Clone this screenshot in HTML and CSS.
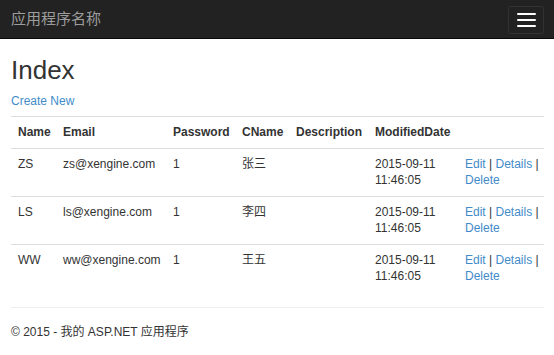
FILE: index.html
```html
<!DOCTYPE html>
<html lang="zh-CN">
<head>
  <meta charset="UTF-8" />
  <meta name="viewport" content="width=device-width, initial-scale=1.0"/>
  <title>Index - 我的 ASP.NET 应用程序</title>
  <link rel="stylesheet" href="styles.css">
</head>
<body>
  <div class="navbar">
    <a class="navbar-brand" href="#">应用程序名称</a>
    <button class="navbar-toggle" type="button">
      <span class="icon-bar"></span>
      <span class="icon-bar"></span>
      <span class="icon-bar"></span>
    </button>
  </div>

  <div class="container body-content">
    <h2>Index</h2>

    <p class="create">
      <a href="#">Create New</a>
    </p>

    <table class="table">
      <colgroup>
        <col class="col-name">
        <col class="col-email">
        <col class="col-password">
        <col class="col-cname">
        <col class="col-desc">
        <col class="col-date">
        <col class="col-actions">
      </colgroup>
      <tr>
        <th>Name</th>
        <th>Email</th>
        <th>Password</th>
        <th>CName</th>
        <th>Description</th>
        <th>ModifiedDate</th>
        <th></th>
      </tr>
      <tr>
        <td>ZS</td>
        <td>zs@xengine.com</td>
        <td>1</td>
        <td>张三</td>
        <td></td>
        <td>2015-09-11 11:46:05</td>
        <td class="actions"><a href="#">Edit</a> | <a href="#">Details</a> | <a href="#">Delete</a></td>
      </tr>
      <tr>
        <td>LS</td>
        <td>ls@xengine.com</td>
        <td>1</td>
        <td>李四</td>
        <td></td>
        <td>2015-09-11 11:46:05</td>
        <td class="actions"><a href="#">Edit</a> | <a href="#">Details</a> | <a href="#">Delete</a></td>
      </tr>
      <tr>
        <td>WW</td>
        <td>ww@xengine.com</td>
        <td>1</td>
        <td>王五</td>
        <td></td>
        <td>2015-09-11 11:46:05</td>
        <td class="actions"><a href="#">Edit</a> | <a href="#">Details</a> | <a href="#">Delete</a></td>
      </tr>
    </table>

    <hr />
    <footer>
      <p>&copy; 2015 - 我的 ASP.NET 应用程序</p>
    </footer>
  </div>
</body>
</html>
```

FILE: styles.css
```css
* {
  box-sizing: border-box;
}

body {
  margin: 0;
  font-family: "Liberation Sans", "Noto Sans CJK SC", sans-serif;
  font-size: 12px;
  line-height: 17px;
  color: #333;
  background: #fff;
}

a {
  color: #428bca;
  text-decoration: none;
}

.navbar {
  height: 39px;
  background: #222;
  border-bottom: 1px solid #080808;
  display: flex;
  align-items: center;
  justify-content: space-between;
  padding: 0 10px 0 11px;
}

.navbar-brand {
  font-size: 15px;
  line-height: 20px;
  color: #9d9d9d;
}

.navbar-toggle {
  width: 36px;
  height: 28px;
  margin-top: 1px;
  padding: 0;
  background: transparent;
  border: 1px solid #333;
  border-radius: 3px;
  display: flex;
  flex-direction: column;
  align-items: center;
  justify-content: center;
  gap: 4px;
}

.icon-bar {
  display: block;
  width: 19px;
  height: 2px;
  border-radius: 1px;
  background: #fff;
}

.container {
  padding: 0 10px 0 11px;
}

h2 {
  margin: 17px 0 9px;
  font-size: 26px;
  font-weight: 500;
  line-height: 28px;
}

.create {
  margin: 0 0 6px;
}

.table {
  width: 100%;
  border-collapse: collapse;
  table-layout: fixed;
  margin-bottom: 15px;
}

.col-name { width: 45px; }
.col-email { width: 110px; }
.col-password { width: 69px; }
.col-cname { width: 54px; }
.col-desc { width: 79px; }
.col-date { width: 90px; }
.col-actions { width: 86px; }

.table th,
.table td {
  padding: 7px;
  line-height: 16.5px;
  text-align: left;
  vertical-align: top;
  border-top: 1px solid #ddd;
}

.table th {
  font-weight: bold;
}

.table td.actions {
  padding-right: 3px;
}

hr {
  margin: 0 0 16px;
  border: 0;
  border-top: 1px solid #eee;
}

footer p {
  margin: 0;
}
```
